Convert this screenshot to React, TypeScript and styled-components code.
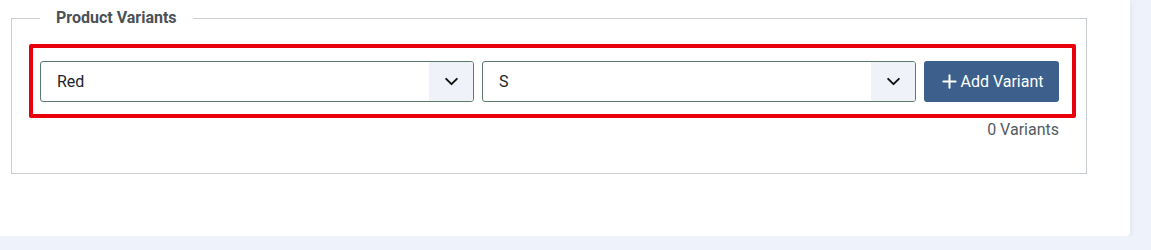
import React from 'react';
import styled, { createGlobalStyle } from 'styled-components';
import { Plus } from 'lucide-react';

const GlobalStyle = createGlobalStyle`
    body {
        margin: 0;
        background-color: #eef2fa;
        font-family: Roboto, 'Liberation Sans', sans-serif;
    }
`;

const ChevronDown = () => (
    <svg width="15" height="15" viewBox="0 0 14 14" fill="none">
        <path
            d="M2 4.5L7 9.5L12 4.5"
            stroke="#111"
            strokeWidth="1.8"
            strokeLinecap="round"
            strokeLinejoin="round"
        />
    </svg>
);

const SelectBox = ({ value }: { value: string }) => (
    <Select>
        <SelectValue>{value}</SelectValue>
        <SelectArrow>
            <ChevronDown />
        </SelectArrow>
    </Select>
);

const App = () => {
    return (
        <>
            <GlobalStyle />
            <Card>
                <Fieldset>
                    <Legend>Product Variants</Legend>
                    <VariantRow>
                        <SelectBox value="Red" />
                        <SelectBox value="S" />
                        <AddButton>
                            <Plus size={21} strokeWidth={2.3} />
                            Add Variant
                        </AddButton>
                    </VariantRow>
                    <VariantCount>0 Variants</VariantCount>
                </Fieldset>
            </Card>
        </>
    );
};

const Card = styled.div`
    width: 1130px;
    box-sizing: border-box;
    background-color: #ffffff;
    padding: 6px 43px 62px 11px;
    border-bottom-right-radius: 4px;
    box-shadow: 0 2px 6px rgba(120, 140, 180, 0.18);
`;

const Fieldset = styled.fieldset`
    margin: 0;
    padding: 14px 10px 32px 17px;
    border: 1px solid #c9ced3;
`;

const Legend = styled.legend`
    margin-left: 11px;
    padding: 0 16px;
    font-size: 16px;
    line-height: 24px;
    font-weight: 700;
    color: #4b5157;
`;

const VariantRow = styled.div`
    display: flex;
    gap: 8px;
    border: 4px solid #e8000b;
    border-radius: 2px;
    padding: 13px 13px 12px 7px;
`;

const Select = styled.div`
    flex: 1;
    display: flex;
    height: 41px;
    box-sizing: border-box;
    border: 1px solid #5b7b6a;
    border-radius: 3px;
    overflow: hidden;
`;

const SelectValue = styled.div`
    flex: 1;
    display: flex;
    align-items: center;
    padding-left: 16px;
    font-size: 16px;
    color: #212529;
`;

const SelectArrow = styled.div`
    width: 44px;
    display: flex;
    align-items: center;
    justify-content: center;
    background-color: #eff3f9;
`;

const AddButton = styled.button`
    width: 135px;
    height: 41px;
    display: flex;
    align-items: center;
    justify-content: center;
    gap: 0;
    border: none;
    border-radius: 3px;
    background-color: #3c5f8c;
    color: #ffffff;
    font-family: Roboto, 'Liberation Sans', sans-serif;
    font-size: 16px;
    padding: 0;
`;

const VariantCount = styled.div`
    margin-top: 1px;
    margin-right: 17px;
    text-align: right;
    font-size: 16px;
    line-height: 22px;
    color: #555b61;
`;

export default App;
